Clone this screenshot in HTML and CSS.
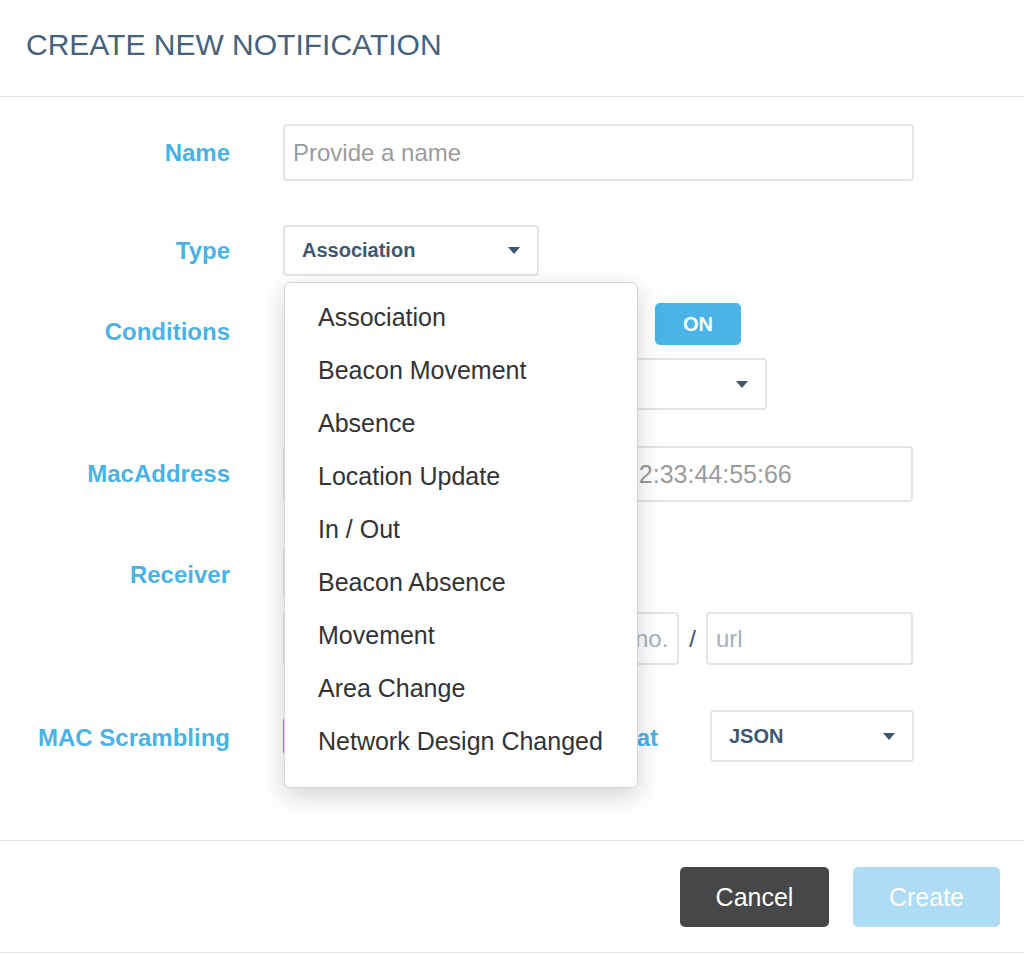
FILE: index.html
```html
<!DOCTYPE html>
<html lang="en">
<head>
<meta charset="utf-8">
<title>Create New Notification</title>
<link rel="stylesheet" href="styles.css">
</head>
<body>
<div class="modal">
  <header class="modal-header">
    <h1 class="modal-title">CREATE NEW NOTIFICATION</h1>
  </header>

  <form class="modal-body">
    <div class="row row-name">
      <label class="label">Name</label>
      <div class="controls">
        <input class="input input-name" type="text" placeholder="Provide a name">
      </div>
    </div>

    <div class="row row-type">
      <label class="label">Type</label>
      <div class="controls type-controls">
        <div class="select select-type"><span class="select-value">Association</span><span class="caret"></span></div>
        <ul class="menu">
          <li class="menu-item">Association</li>
          <li class="menu-item">Beacon Movement</li>
          <li class="menu-item">Absence</li>
          <li class="menu-item">Location Update</li>
          <li class="menu-item">In / Out</li>
          <li class="menu-item">Beacon Absence</li>
          <li class="menu-item">Movement</li>
          <li class="menu-item">Area Change</li>
          <li class="menu-item">Network Design Changed</li>
        </ul>
      </div>
    </div>

    <div class="row row-top row-conditions">
      <label class="label">Conditions</label>
      <div class="controls stack">
        <div class="cond-line">
          <span class="cond-spacer"></span>
          <button type="button" class="btn-toggle">ON</button>
        </div>
        <div class="cond-line2">
          <span class="cond-spacer"></span>
          <div class="select select-cond"><span class="select-value"></span><span class="caret"></span></div>
        </div>
      </div>
    </div>

    <div class="row row-mac">
      <label class="label">MacAddress</label>
      <div class="controls mac-line">
        <div class="select select-op"></div>
        <input class="input input-mac" type="text" placeholder="11:22:33:44:55:66">
      </div>
    </div>

    <div class="row row-top row-receiver">
      <label class="label">Receiver</label>
      <div class="controls stack">
        <div class="select select-proto"></div>
        <div class="recv-line">
          <input class="input input-host" type="text">
          <span class="sep sep-colon"></span>
          <input class="input input-port" type="text" placeholder="port no.">
          <span class="sep sep-slash">/</span>
          <input class="input input-url" type="text" placeholder="url">
        </div>
      </div>
    </div>

    <div class="row row-scramble">
      <label class="label">MAC Scrambling</label>
      <div class="controls scramble-line">
        <span class="toggle-block"></span>
        <span class="label label-inline">Format</span>
        <div class="select select-format"><span class="select-value">JSON</span><span class="caret"></span></div>
      </div>
    </div>
  </form>

  <footer class="modal-footer">
    <button type="button" class="btn btn-cancel">Cancel</button>
    <button type="button" class="btn btn-create">Create</button>
  </footer>
</div>
</body>
</html>
```
FILE: styles.css
```css
* { box-sizing: border-box; }

html, body {
  margin: 0;
  padding: 0;
  background: #ffffff;
}

body {
  font-family: "Liberation Sans", Arial, Helvetica, sans-serif;
  color: #333333;
}

.modal {
  width: 1024px;
  background: #ffffff;
}

/* Header */
.modal-header {
  height: 97px;
  padding: 28px 26px 0;
  border-bottom: 1px solid #e3e3e3;
}

.modal-title {
  margin: 0;
  font-size: 30px;
  line-height: 34px;
  font-weight: normal;
  color: #46617b;
  letter-spacing: 0;
}

/* Body */
.modal-body {
  padding: 27px 0 78px;
  margin: 0;
}

.row {
  display: flex;
  align-items: center;
}

.row-top { align-items: flex-start; }

.label {
  flex: none;
  width: 230px;
  text-align: right;
  font-size: 24px;
  line-height: 30px;
  font-weight: bold;
  color: #4ab3e5;
}

.controls {
  margin-left: 53px;
}

.stack {
  display: flex;
  flex-direction: column;
}

.row-type { margin-top: 44px; }
.row-conditions { margin-top: 27px; }
.row-mac { margin-top: 36px; }
.row-receiver { margin-top: 46px; }
.row-scramble { margin-top: 45px; }

.row-conditions > .label { padding-top: 14px; }
.row-receiver > .label { padding-top: 12px; }
.row-scramble > .label { padding-top: 4px; }

/* Inputs */
.input {
  display: block;
  height: 56px;
  border: 2px solid #e4e4e4;
  border-radius: 4px;
  padding: 0 8px;
  font-family: inherit;
  font-size: 24px;
  color: #333333;
  background: #ffffff;
  outline: none;
}

.input::placeholder { color: #9b9b9b; }

.input-name { width: 631px; height: 57px; }

/* Selects */
.select {
  display: flex;
  align-items: center;
  justify-content: space-between;
  height: 51px;
  border: 2px solid #e4e4e4;
  border-radius: 4px;
  padding: 0 17px 0 17px;
  background: #ffffff;
}

.select-value {
  font-size: 20px;
  font-weight: bold;
  color: #3e5670;
}

.caret {
  width: 0;
  height: 0;
  border-left: 6.5px solid transparent;
  border-right: 6.5px solid transparent;
  border-top: 7px solid #3e5670;
}

.select-type { width: 256px; }

/* Dropdown menu */
.type-controls { position: relative; }

.menu {
  position: absolute;
  top: 57px;
  left: 1px;
  width: 354px;
  margin: 0;
  padding: 8px 0 19px;
  list-style: none;
  background: #ffffff;
  border: 1px solid #d5d5d5;
  border-radius: 6px;
  box-shadow: 0 8px 26px rgba(0, 0, 0, 0.18);
  z-index: 10;
}

.menu-item {
  height: 53px;
  line-height: 53px;
  padding-left: 33px;
  font-size: 25px;
  color: #333333;
  white-space: nowrap;
}

/* Conditions */
.cond-line {
  display: grid;
  grid-template-columns: 372px 86px;
  align-items: center;
  height: 42px;
}

.btn-toggle {
  width: 86px;
  height: 42px;
  border: none;
  border-radius: 5px;
  background: #4ab4e6;
  color: #ffffff;
  font-family: inherit;
  font-size: 20px;
  font-weight: bold;
  padding: 0;
}

.cond-line2 {
  display: grid;
  grid-template-columns: 160px 324px;
  align-items: center;
  margin-top: 13px;
}

.select-cond { height: 52px; }

/* MacAddress */
.mac-line {
  display: flex;
  align-items: center;
  gap: 10px;
}

.select-op { width: 288px; height: 56px; }

.input-mac {
  width: 332px;
  padding-left: 9px;
  font-size: 25px;
}

/* Receiver */
.select-proto { width: 256px; height: 50px; }

.recv-line {
  display: flex;
  align-items: center;
  margin-top: 14px;
}

.recv-line .input { height: 53px; }
.recv-line .input::placeholder { color: #a5b1bd; }

.input-host { width: 274px; }
.input-port { width: 102px; padding-left: 8px; }
.input-url { width: 207px; padding-left: 8px; }

.sep {
  font-size: 24px;
  color: #3e5670;
  text-align: center;
}

.sep-colon { width: 20px; }
.sep-slash { width: 27px; }

/* MAC Scrambling */
.scramble-line {
  display: flex;
  align-items: center;
  width: 631px;
}

.toggle-block {
  width: 86px;
  height: 40px;
  border-radius: 5px;
  background: #4ab4e6;
}

.label-inline {
  width: auto;
  flex: 1;
  margin-right: 52px;
  padding-top: 4px;
}

.select-format { width: 204px; height: 52px; padding-left: 17px; }

/* Footer */
.modal-footer {
  display: flex;
  justify-content: flex-end;
  gap: 24px;
  padding: 26px 24px 25px;
  border-top: 1px solid #e3e3e3;
  border-bottom: 1px solid #e3e3e3;
}

.btn {
  height: 60px;
  border: none;
  border-radius: 5px;
  color: #ffffff;
  font-family: inherit;
  font-size: 25px;
  padding: 0;
}

.btn-cancel { width: 149px; background: #474747; }
.btn-create { width: 147px; background: #aedcf4; }
```
